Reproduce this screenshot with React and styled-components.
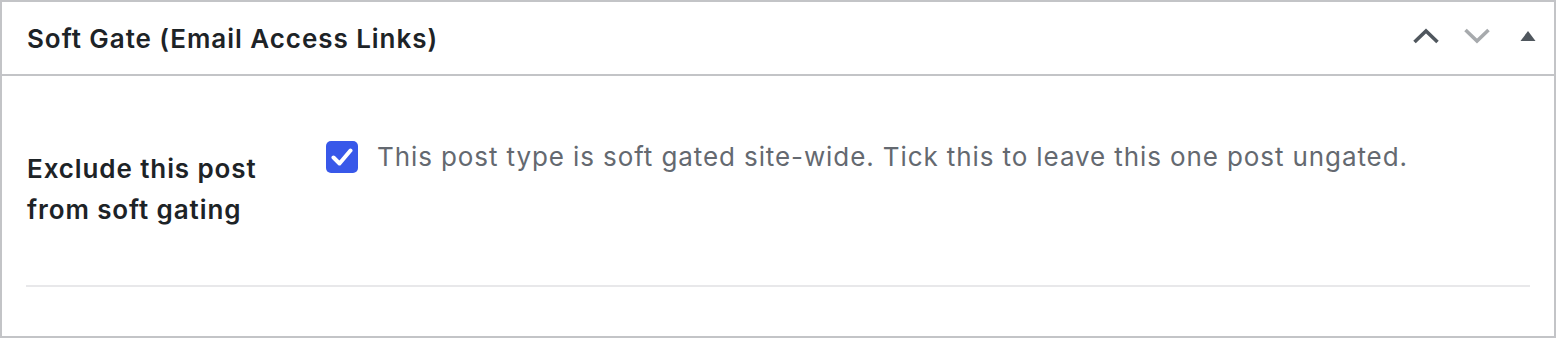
import React, { useState } from "react";
import styled, { createGlobalStyle } from "styled-components";

const GlobalStyle = createGlobalStyle`
  html, body {
    margin: 0;
    padding: 0;
    background: #ffffff;
  }
  body {
    font-family: Inter, "Noto Sans", "Liberation Sans", sans-serif;
  }
`;

const Postbox = styled.div`
  box-sizing: border-box;
  width: 1556px;
  height: 338px;
  border: 2px solid #c3c4c7;
  background: #fff;
  display: flex;
  flex-direction: column;
`;

const Header = styled.div`
  height: 72px;
  display: flex;
  align-items: center;
  justify-content: space-between;
  border-bottom: 2px solid #c3c4c7;
  padding: 0 1px 0 25px;
`;

const Title = styled.h2`
  margin: 0;
  font-size: 26px;
  font-weight: 600;
  color: #1d2327;
  letter-spacing: 0.95px;
`;

const Handles = styled.div`
  display: flex;
  align-items: center;
  margin-top: -4px;
`;

const HandleButton = styled.button`
  width: 51px;
  height: 52px;
  border: 0;
  background: transparent;
  padding: 0;
  display: flex;
  align-items: center;
  justify-content: center;
  color: ${(p) => (p.$muted ? "#a7aaad" : "#50575e")};
  cursor: pointer;
`;

const Inside = styled.div`
  flex: 1;
  padding: 0 24px;
`;

const Row = styled.div`
  display: grid;
  grid-template-columns: 298px 1fr;
  padding: 66px 0 55px 0;
  border-bottom: 2px solid #e8e8ea;
`;

const FieldLabel = styled.div`
  font-size: 26px;
  font-weight: 600;
  line-height: 41px;
  letter-spacing: 0.9px;
  color: #1d2327;
  padding-left: 1px;
  padding-top: 6px;
`;

const Field = styled.label`
  display: flex;
  align-items: flex-start;
  gap: 19px;
  padding-left: 2px;
  margin-top: -1px;
  cursor: pointer;
`;

const Box = styled.span`
  flex: none;
  width: 32px;
  height: 32px;
  border-radius: 5px;
  background: ${(p) => (p.$checked ? "#3858e9" : "#fff")};
  border: ${(p) => (p.$checked ? "none" : "2px solid #8c8f94")};
  box-sizing: border-box;
  display: flex;
  align-items: center;
  justify-content: center;
`;

const Description = styled.span`
  font-size: 26px;
  line-height: 32px;
  letter-spacing: 0.9px;
  color: #646970;
`;

const ChevronUp = () => (
  <svg width="28" height="18" viewBox="0 0 28 18">
    <path d="M2.5 15 L14 4 L25.5 15" fill="none" stroke="currentColor" strokeWidth="3.6" />
  </svg>
);

const ChevronDown = () => (
  <svg width="28" height="18" viewBox="0 0 28 18">
    <path d="M2.5 3 L14 14 L25.5 3" fill="none" stroke="currentColor" strokeWidth="3.6" />
  </svg>
);

const Triangle = () => (
  <svg width="16" height="12" viewBox="0 0 16 12">
    <path d="M8 1 L15.5 11 L0.5 11 Z" fill="currentColor" />
  </svg>
);

const Check = () => (
  <svg width="22" height="18" viewBox="0 0 22 18">
    <path
      d="M2.5 9.5 L8.5 15.5 L19.5 2.5"
      fill="none"
      stroke="#fff"
      strokeWidth="4"
      strokeLinecap="round"
      strokeLinejoin="round"
    />
  </svg>
);

export default function App() {
  const [checked, setChecked] = useState(true);

  return (
    <>
      <GlobalStyle />
      <Postbox>
        <Header>
          <Title>Soft Gate (Email Access Links)</Title>
          <Handles>
            <HandleButton aria-label="Move up">
              <ChevronUp />
            </HandleButton>
            <HandleButton $muted aria-label="Move down">
              <ChevronDown />
            </HandleButton>
            <HandleButton aria-label="Toggle panel">
              <Triangle />
            </HandleButton>
          </Handles>
        </Header>
        <Inside>
          <Row>
            <FieldLabel>
              Exclude this post
              <br />
              from soft gating
            </FieldLabel>
            <Field onClick={() => setChecked(!checked)}>
              <Box $checked={checked}>{checked && <Check />}</Box>
              <Description>
                This post type is soft gated site-wide. Tick this to leave this one post ungated.
              </Description>
            </Field>
          </Row>
        </Inside>
      </Postbox>
    </>
  );
}
